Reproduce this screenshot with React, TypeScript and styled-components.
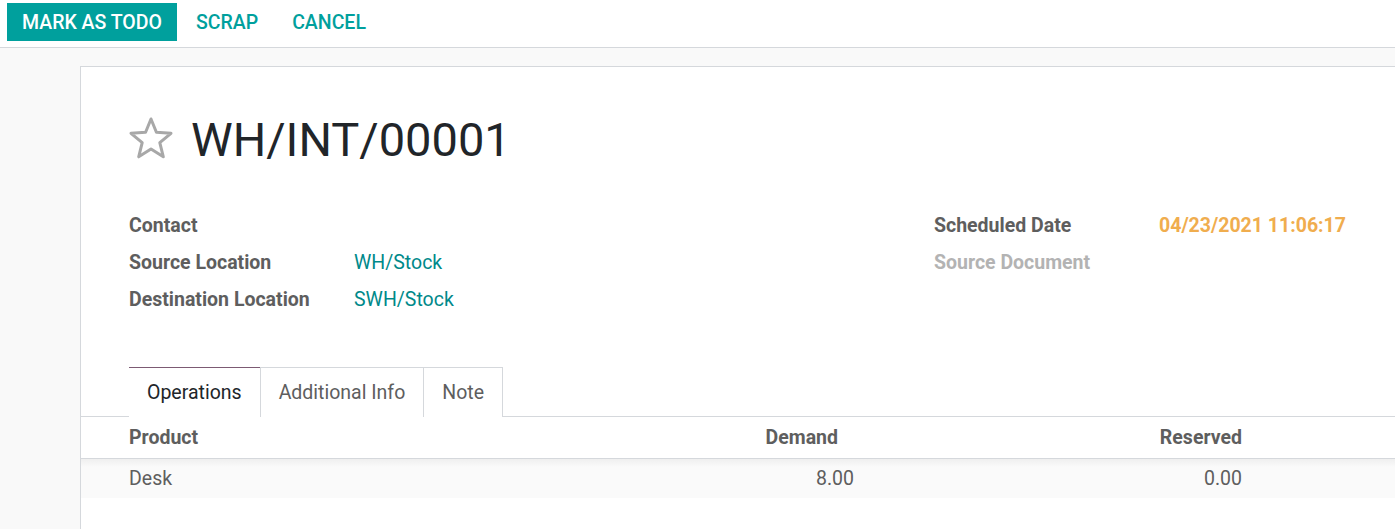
import React from "react";
import styled, { createGlobalStyle } from "styled-components";

const Global = createGlobalStyle`
  html, body { margin: 0; padding: 0; background: #f9f9f9; }
  body { font-family: Roboto, "Noto Sans", sans-serif; overflow: hidden; }
  * { box-sizing: border-box; }
`;

const Page = styled.div`
  width: 1395px;
  height: 529px;
  display: flex;
  flex-direction: column;
  background: #f9f9f9;
`;

const Toolbar = styled.div`
  height: 48px;
  background: #fff;
  border-bottom: 1px solid #d5d8dc;
  display: flex;
  align-items: flex-start;
  padding: 3px 0 0 7px;
`;

const ActionButton = styled.button<{ $primary?: boolean }>`
  height: 38px;
  border: none;
  font-family: Roboto, sans-serif;
  font-size: 19.5px;
  font-weight: 500;
  text-transform: uppercase;
  padding: 0 ${(p) => (p.$primary ? "15px" : "17px")};
  margin-right: ${(p) => (p.$primary ? "2px" : "0")};
  background: ${(p) => (p.$primary ? "#00a09d" : "transparent")};
  color: ${(p) => (p.$primary ? "#fff" : "#00a09d")};
  cursor: pointer;
`;

const Body = styled.div`
  flex: 1;
  padding: 18px 0 0 80px;
  display: flex;
`;

const Sheet = styled.div`
  flex: 1;
  background: #fff;
  border: 1px solid #d5d8dc;
  border-right: none;
  border-bottom: none;
  padding-top: 47px;
`;

const TitleRow = styled.div`
  display: flex;
  align-items: center;
  padding-left: 47px;
  gap: 17px;
  height: 48px;
`;

const Title = styled.h1`
  margin: 0;
  font-family: Roboto, sans-serif;
  font-weight: 400;
  font-size: 47px;
  color: #212529;
  line-height: 1;
  padding-top: 2px;
`;

const Groups = styled.div`
  display: grid;
  grid-template-columns: 805px 1fr;
  padding-left: 48px;
  margin-top: 45px;
`;

const FieldGrid = styled.div<{ $label: number }>`
  display: grid;
  grid-template-columns: ${(p) => p.$label}px 1fr;
  grid-auto-rows: 37px;
  align-items: center;
`;

const Label = styled.div<{ $muted?: boolean }>`
  font-size: 19.5px;
  font-weight: 700;
  color: ${(p) => (p.$muted ? "#b3b3b3" : "#5e5e5e")};
`;

const Value = styled.div<{ $tone?: "link" | "warn" }>`
  font-size: 19.5px;
  font-weight: ${(p) => (p.$tone === "warn" ? 700 : 400)};
  color: ${(p) => (p.$tone === "warn" ? "#f0ad4e" : "#00898a")};
`;

const Tabs = styled.div`
  display: flex;
  margin-top: 49px;
  padding-left: 48px;
  border-bottom: 1px solid #d5d8dc;
  height: 50px;
`;

const Tab = styled.div<{ $active?: boolean }>`
  font-size: 19.5px;
  padding: 0 18px;
  display: flex;
  align-items: center;
  height: 50px;
  color: ${(p) => (p.$active ? "#212529" : "#5e5e5e")};
  background: #fff;
  border: 1px solid #d5d8dc;
  border-left: ${(p) => (p.$active ? "none" : "1px solid #d5d8dc")};
  margin-left: ${(p) => (p.$active ? "0" : "-1px")};
  border-top: 1px solid ${(p) => (p.$active ? "#7c5a73" : "#d5d8dc")};
  border-bottom: ${(p) => (p.$active ? "1px solid #fff" : "none")};
  &:first-child { margin-left: 0; }
`;

const TableRow = styled.div<{ $head?: boolean }>`
  display: grid;
  grid-template-columns: 520px 205px 388px 1fr;
  align-items: center;
  padding-left: 48px;
  height: ${(p) => (p.$head ? "42px" : "39px")};
  font-size: 19.5px;
  color: #5e5e5e;
  font-weight: ${(p) => (p.$head ? 700 : 400)};
  background: ${(p) => (p.$head ? "#fff" : "linear-gradient(#efefef, #fafafa 8px, #fafafa)")};
  border-bottom: ${(p) => (p.$head ? "1px solid #d5d8dc" : "none")};
`;

const Cell = styled.div<{ $right?: boolean; $pad?: number }>`
  text-align: ${(p) => (p.$right ? "right" : "left")};
  padding-right: ${(p) => p.$pad ?? 0}px;
  white-space: nowrap;
`;

const Star = () => (
  <svg width="46" height="42" viewBox="0 0 46 42">
    <path
      d="M23 2 L28.4 15.2 L43 16.3 L31.8 25.6 L35.3 39.8 L23 32.1 L10.7 39.8 L14.2 25.6 L3 16.3 L17.6 15.2 Z"
      fill="none"
      stroke="#a8a8a8"
      strokeWidth="3"
      strokeLinejoin="round"
    />
  </svg>
);

export default function App() {
  return (
    <Page>
      <Global />
      <Toolbar>
        <ActionButton $primary>Mark as Todo</ActionButton>
        <ActionButton>Scrap</ActionButton>
        <ActionButton>Cancel</ActionButton>
      </Toolbar>
      <Body>
        <Sheet>
          <TitleRow>
            <Star />
            <Title>WH/INT/00001</Title>
          </TitleRow>
          <Groups>
            <FieldGrid $label={225}>
              <Label>Contact</Label>
              <Value />
              <Label>Source Location</Label>
              <Value $tone="link">WH/Stock</Value>
              <Label>Destination Location</Label>
              <Value $tone="link">SWH/Stock</Value>
            </FieldGrid>
            <FieldGrid $label={225}>
              <Label>Scheduled Date</Label>
              <Value $tone="warn">04/23/2021 11:06:17</Value>
              <Label $muted>Source Document</Label>
              <Value />
            </FieldGrid>
          </Groups>
          <Tabs>
            <Tab $active>Operations</Tab>
            <Tab>Additional Info</Tab>
            <Tab>Note</Tab>
          </Tabs>
          <TableRow $head>
            <Cell>Product</Cell>
            <Cell $right $pad={16}>Demand</Cell>
            <Cell $right>Reserved</Cell>
            <Cell />
          </TableRow>
          <TableRow>
            <Cell>Desk</Cell>
            <Cell $right>8.00</Cell>
            <Cell $right>0.00</Cell>
            <Cell />
          </TableRow>
        </Sheet>
      </Body>
    </Page>
  );
}
